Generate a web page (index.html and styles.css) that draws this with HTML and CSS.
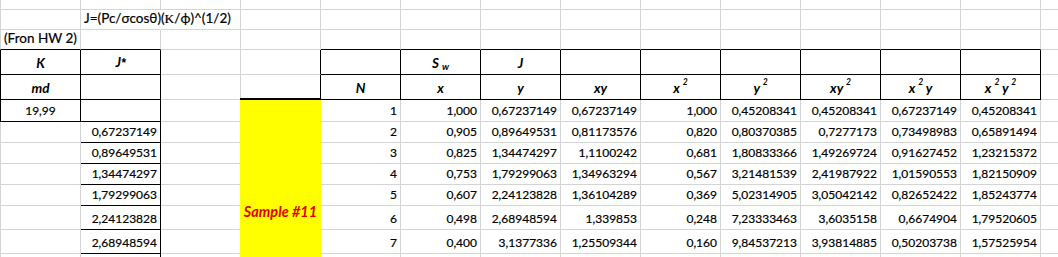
FILE: index.html
```html
<!DOCTYPE html>
<html lang="es">
<head>
<meta charset="utf-8">
<title>Hoja</title>
<link rel="stylesheet" href="styles.css">
</head>
<body>
<div class="sheet">
  <!-- row 1 (partial) -->
  <div class="c first"></div><div class="c"></div><div class="c"></div><div class="c"></div><div class="c"></div><div class="c"></div><div class="c"></div><div class="c"></div><div class="c"></div><div class="c"></div><div class="c"></div><div class="c"></div><div class="c"></div><div class="c"></div>
  <!-- row 2 -->
  <div class="c first"></div>
  <div class="c nr"><span>J=(Pc/σcosθ)(<span class="serif">K</span>/ϕ)^(1/2)</span></div>
  <div class="c"></div><div class="c"></div><div class="c"></div><div class="c"></div><div class="c"></div><div class="c"></div><div class="c"></div><div class="c"></div><div class="c"></div><div class="c"></div><div class="c"></div><div class="c"></div>
  <!-- row 3 -->
  <div class="c first B">(Fron HW 2)</div>
  <div class="c B"></div>
  <div class="c"></div><div class="c"></div>
  <div class="c B"></div><div class="c B"></div><div class="c B"></div><div class="c B"></div><div class="c B"></div><div class="c B"></div><div class="c B"></div><div class="c B"></div><div class="c B"></div>
  <div class="c"></div>
  <!-- row 4 -->
  <div class="c first L R B ctr hd">K</div>
  <div class="c R B ctr hd"><span>J<span class="ast">*</span></span></div>
  <div class="c"></div>
  <div class="c R"></div>
  <div class="c R B"></div>
  <div class="c R B ctr hd"><span>S <sub>w</sub></span></div>
  <div class="c R B ctr hd">J</div>
  <div class="c R B"></div><div class="c R B"></div><div class="c R B"></div><div class="c R B"></div><div class="c R B"></div><div class="c R B"></div>
  <div class="c"></div>
  <!-- row 5 -->
  <div class="c first L R B ctr hd">md</div>
  <div class="c R B"></div>
  <div class="c"></div>
  <div class="c R"></div>
  <div class="c R B ctr hd">N</div>
  <div class="c R B ctr hd">x</div>
  <div class="c R B ctr hd">y</div>
  <div class="c R B ctr hd">xy</div>
  <div class="c R B ctr hd"><span>x <sup>2</sup></span></div>
  <div class="c R B ctr hd"><span>y <sup>2</sup></span></div>
  <div class="c R B ctr hd"><span>xy <sup>2</sup></span></div>
  <div class="c R B ctr hd"><span>x <sup>2</sup> y</span></div>
  <div class="c R B ctr hd"><span>x <sup>2</sup> y <sup>2</sup></span></div>
  <div class="c"></div>
  <!-- row 6 -->
  <div class="c first L R B ctr num">19,99</div>
  <div class="c R B"></div>
  <div class="c"></div>
  <div class="sample">Sample #11</div>
  <div class="c num">1</div><div class="c num">1,000</div><div class="c num">0,67237149</div><div class="c num">0,67237149</div><div class="c num">1,000</div><div class="c num">0,45208341</div><div class="c num">0,45208341</div><div class="c num">0,67237149</div><div class="c num">0,45208341</div>
  <div class="c"></div>
  <!-- row 7 -->
  <div class="c first"></div>
  <div class="c R B num">0,67237149</div>
  <div class="c"></div>
  <div class="c num">2</div><div class="c num">0,905</div><div class="c num">0,89649531</div><div class="c num">0,81173576</div><div class="c num">0,820</div><div class="c num">0,80370385</div><div class="c num">0,7277173</div><div class="c num">0,73498983</div><div class="c num">0,65891494</div>
  <div class="c"></div>
  <!-- row 8 -->
  <div class="c first"></div>
  <div class="c R B num">0,89649531</div>
  <div class="c"></div>
  <div class="c num">3</div><div class="c num">0,825</div><div class="c num">1,34474297</div><div class="c num">1,1100242</div><div class="c num">0,681</div><div class="c num">1,80833366</div><div class="c num">1,49269724</div><div class="c num">0,91627452</div><div class="c num">1,23215372</div>
  <div class="c"></div>
  <!-- row 9 -->
  <div class="c first"></div>
  <div class="c R B num">1,34474297</div>
  <div class="c"></div>
  <div class="c num">4</div><div class="c num">0,753</div><div class="c num">1,79299063</div><div class="c num">1,34963294</div><div class="c num">0,567</div><div class="c num">3,21481539</div><div class="c num">2,41987922</div><div class="c num">1,01590553</div><div class="c num">1,82150909</div>
  <div class="c"></div>
  <!-- row 10 -->
  <div class="c first"></div>
  <div class="c R B num">1,79299063</div>
  <div class="c"></div>
  <div class="c num">5</div><div class="c num">0,607</div><div class="c num">2,24123828</div><div class="c num">1,36104289</div><div class="c num">0,369</div><div class="c num">5,02314905</div><div class="c num">3,05042142</div><div class="c num">0,82652422</div><div class="c num">1,85243774</div>
  <div class="c"></div>
  <!-- row 11 -->
  <div class="c first"></div>
  <div class="c R B num">2,24123828</div>
  <div class="c"></div>
  <div class="c num">6</div><div class="c num">0,498</div><div class="c num">2,68948594</div><div class="c num">1,339853</div><div class="c num">0,248</div><div class="c num">7,23333463</div><div class="c num">3,6035158</div><div class="c num">0,6674904</div><div class="c num">1,79520605</div>
  <div class="c"></div>
  <!-- row 12 -->
  <div class="c first"></div>
  <div class="c R B num">2,68948594</div>
  <div class="c"></div>
  <div class="c num">7</div><div class="c num">0,400</div><div class="c num">3,1377336</div><div class="c num">1,25509344</div><div class="c num">0,160</div><div class="c num">9,84537213</div><div class="c num">3,93814885</div><div class="c num">0,50203738</div><div class="c num">1,57525954</div>
  <div class="c"></div>
  <!-- row 13 (partial) -->
  <div class="c first"></div>
  <div class="c R B"></div>
  <div class="c"></div>
  <div class="c"></div><div class="c"></div><div class="c"></div><div class="c"></div><div class="c"></div><div class="c"></div><div class="c"></div><div class="c"></div><div class="c"></div><div class="c"></div>
</div>
</body>
</html>
```

FILE: styles.css
```css
:root {
  --grid: #d4d4d4;
  --line: #000;
}

html, body {
  margin: 0;
  padding: 0;
  background: #fff;
  overflow: hidden;
}

body {
  font-family: Lato, "Liberation Sans", sans-serif;
  font-size: 13.5px;
  color: #000;
}

.sheet {
  display: grid;
  grid-template-columns: 81px repeat(13, 80px);
  grid-template-rows: 10px 20px 20px 25px 25px 22px 21px 21px 21px 21px 24px 24px 24px;
  width: 1121px;
}

.c {
  box-sizing: border-box;
  border-right: 1px solid var(--grid);
  border-bottom: 1px solid var(--grid);
  display: flex;
  align-items: flex-end;
  justify-content: flex-start;
  padding: 0 3px 3px;
  line-height: 15px;
  white-space: nowrap;
  min-width: 0;
  -webkit-text-stroke: 0.2px currentColor;
}

.c.first { border-left: 1px solid var(--grid); }
.c.L { border-left-color: var(--line); }
.c.R { border-right-color: var(--line); }
.c.B { border-bottom-color: var(--line); }
.c.nr { border-right-color: transparent; }

.ctr { justify-content: center; }
.num {
  justify-content: flex-end;
  font-size: 12px;
  line-height: 14px;
}
.num.ctr { justify-content: center; }

.hd {
  font-weight: bold;
  font-style: italic;
  -webkit-text-stroke: 0;
}

.hd sup {
  font-size: 8.5px;
  line-height: 0;
  vertical-align: 8px;
}

.hd sub {
  font-size: 9.5px;
  line-height: 0;
  vertical-align: -2px;
}

.ast {
  font-family: "Liberation Sans", sans-serif;
  font-size: 12px;
}

.serif {
  font-family: "Liberation Serif", serif;
}

.sample {
  grid-column: 4;
  grid-row: 6 / span 8;
  position: relative;
  box-sizing: border-box;
  margin: -2px 0 0 -1px;
  border-top: 2px solid var(--line);
  background: #ffff00;
  color: #e00000;
  font-weight: bold;
  font-style: italic;
  font-size: 14.5px;
  line-height: 17px;
  display: flex;
  justify-content: center;
  align-items: flex-start;
  padding-top: 103px;
  white-space: nowrap;
}
```
